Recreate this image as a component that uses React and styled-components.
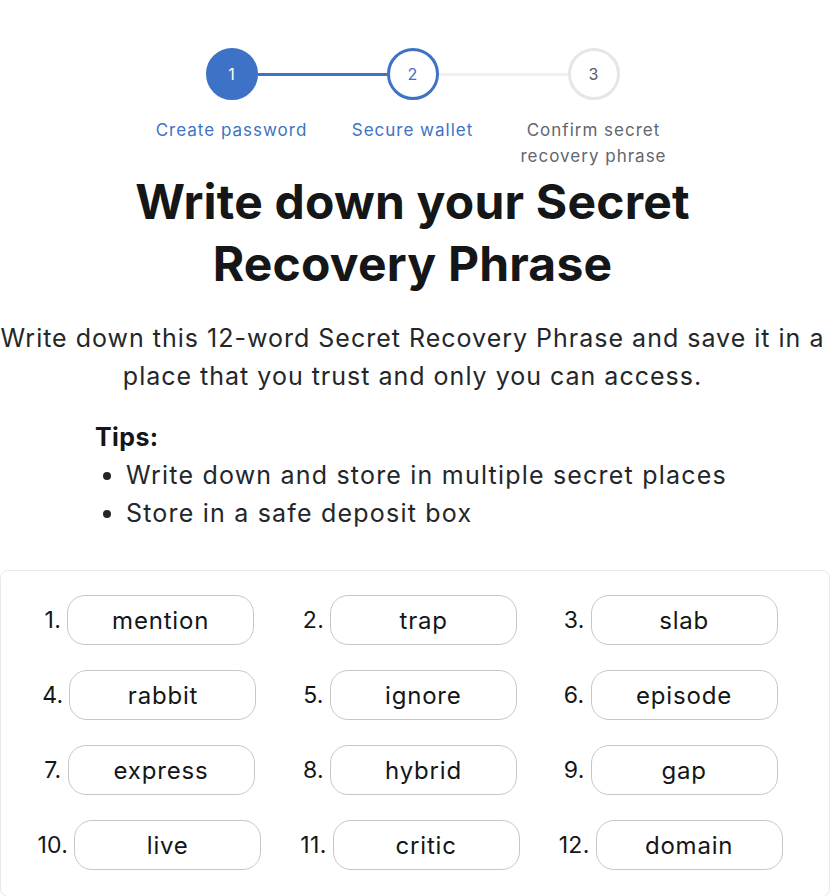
import React from "react"
import styled, { createGlobalStyle } from "styled-components"

const GlobalStyle = createGlobalStyle`
  body {
    margin: 0;
    background: #ffffff;
    font-family: "Inter", "Noto Sans", sans-serif;
    color: #24272a;
  }
`

const Page = styled.div`
  width: 830px;
  display: flex;
  flex-direction: column;
  align-items: center;
  overflow: hidden;
`

const CircleRow = styled.div`
  display: flex;
  align-items: center;
  margin-top: 48px;
  margin-left: -5px;
`

const Circle = styled.div`
  width: 52px;
  height: 52px;
  box-sizing: border-box;
  border-radius: 50%;
  display: flex;
  align-items: center;
  justify-content: center;
  font-size: 16px;
  background: ${(p) => (p.state === "done" ? "#3d72c6" : "#ffffff")};
  color: ${(p) => (p.state === "done" ? "#ffffff" : p.state === "active" ? "#3d72c6" : "#555b62")};
  border: 3px solid ${(p) => (p.state === "todo" ? "#e6e6e6" : "#3d72c6")};
`

const Connector = styled.div`
  width: 129px;
  height: 3px;
  background: ${(p) => (p.active ? "#3d72c6" : "#f0f0f0")};
`

const LabelRow = styled.div`
  display: grid;
  grid-template-columns: repeat(3, 181px);
  margin-top: 17px;
  margin-left: -5px;
`

const StepLabel = styled.div`
  text-align: center;
  font-size: 17px;
  line-height: 26px;
  letter-spacing: 1px;
  padding: 0 12px;
  color: ${(p) => (p.muted ? "#5f6670" : "#3d72c6")};
`

const Title = styled.h1`
  margin: 2px 0 0;
  font-size: 48px;
  line-height: 62px;
  font-weight: 700;
  letter-spacing: 0.2px;
  text-align: center;
  color: #141618;
  margin-left: -5px;
`

const Description = styled.p`
  margin: 24px 0 0;
  font-size: 25px;
  line-height: 38px;
  letter-spacing: 1px;
  text-align: center;
  white-space: nowrap;
  margin-left: -5px;
`

const Tips = styled.div`
  align-self: stretch;
  margin-top: 23px;
  padding-left: 95px;
  font-size: 25px;
  line-height: 38px;
  letter-spacing: 1.2px;
`

const TipsTitle = styled.div`
  font-weight: 700;
  letter-spacing: 0.4px;
  color: #141618;
`

const TipList = styled.ul`
  margin: 0;
  padding-left: 31px;
`

const PhraseBox = styled.div`
  align-self: stretch;
  margin-top: 38px;
  border: 1px solid #e9e9e9;
  border-radius: 8px;
  padding: 24px 28px 26px 18px;
  display: grid;
  grid-template-columns: repeat(3, 1fr);
  row-gap: 25px;
`

const Chip = styled.div`
  display: flex;
  align-items: center;
  justify-content: center;
  gap: 6px;
`

const ChipNumber = styled.span`
  font-size: 23px;
  letter-spacing: 0.3px;
  color: #141618;
`

const ChipWord = styled.div`
  width: 187px;
  height: 50px;
  box-sizing: border-box;
  border: 1px solid #c7c7c7;
  border-radius: 18px;
  display: flex;
  align-items: center;
  justify-content: center;
  font-size: 24px;
  letter-spacing: 0.8px;
  color: #141618;
`

const steps = [
  { n: 1, label: "Create password", state: "done" },
  { n: 2, label: "Secure wallet", state: "active" },
  { n: 3, label: "Confirm secret recovery phrase", state: "todo" },
]

const words = [
  "mention", "trap", "slab",
  "rabbit", "ignore", "episode",
  "express", "hybrid", "gap",
  "live", "critic", "domain",
]

const App = () => {
  return (
    <Page>
      <GlobalStyle />
      <CircleRow>
        <Circle state="done">1</Circle>
        <Connector active />
        <Circle state="active">2</Circle>
        <Connector />
        <Circle state="todo">3</Circle>
      </CircleRow>
      <LabelRow>
        {steps.map((s) => (
          <StepLabel key={s.n} muted={s.state === "todo"}>{s.label}</StepLabel>
        ))}
      </LabelRow>
      <Title>
        Write down your Secret
        <br />
        Recovery Phrase
      </Title>
      <Description>
        Write down this 12-word Secret Recovery Phrase and save it in a
        <br />
        place that you trust and only you can access.
      </Description>
      <Tips>
        <TipsTitle>Tips:</TipsTitle>
        <TipList>
          <li>Write down and store in multiple secret places</li>
          <li>Store in a safe deposit box</li>
        </TipList>
      </Tips>
      <PhraseBox>
        {words.map((w, i) => (
          <Chip key={w}>
            <ChipNumber>{i + 1}.</ChipNumber>
            <ChipWord>{w}</ChipWord>
          </Chip>
        ))}
      </PhraseBox>
    </Page>
  )
}

export default App
